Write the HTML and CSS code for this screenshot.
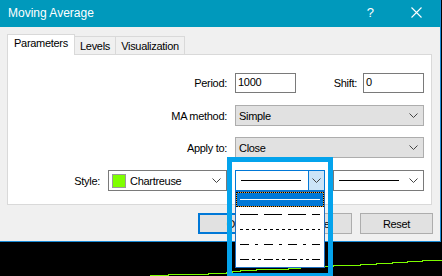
FILE: index.html
```html
<!DOCTYPE html>
<html lang="en">
<head>
  <meta charset="UTF-8">
  <title>Moving Average</title>
  <link rel="stylesheet" href="styles.css">
</head>
<body>
  <div class="dialog">
    <div class="titlebar">
      <span class="title">Moving Average</span>
      <span class="help">?</span>
      <svg class="close" width="11" height="11" viewBox="0 0 11 11">
        <path d="M0.5 0.5 L10.5 10.5 M10.5 0.5 L0.5 10.5" stroke="#fff" stroke-width="1.1" fill="none"/>
      </svg>
    </div>

    <div class="content">
      <div class="tabs">
        <div class="tab active">Parameters</div>
        <div class="tab">Levels</div>
        <div class="tab">Visualization</div>
      </div>

      <div class="panel">
        <div class="row first">
          <span class="label">Period:</span>
          <div class="input">1000</div>
          <span class="label shift">Shift:</span>
          <div class="input">0</div>
        </div>

        <div class="row">
          <span class="label">MA method:</span>
          <div class="select wide">
            <span class="value">Simple</span>
            <svg class="chev" width="9" height="5" viewBox="0 0 9 5"><polyline points="0.5,0.5 4.5,4.5 8.5,0.5" fill="none" stroke="#444" stroke-width="1"/></svg>
          </div>
        </div>

        <div class="row">
          <span class="label">Apply to:</span>
          <div class="select wide">
            <span class="value">Close</span>
            <svg class="chev" width="9" height="5" viewBox="0 0 9 5"><polyline points="0.5,0.5 4.5,4.5 8.5,0.5" fill="none" stroke="#444" stroke-width="1"/></svg>
          </div>
        </div>

        <div class="row">
          <span class="label">Style:</span>
          <div class="select color">
            <span class="swatch"></span>
            <span class="value">Chartreuse</span>
            <svg class="chev" width="9" height="5" viewBox="0 0 9 5"><polyline points="0.5,0.5 4.5,4.5 8.5,0.5" fill="none" stroke="#444" stroke-width="1"/></svg>
          </div>

          <div class="select line open">
            <div class="line-area"><span class="solid"></span></div>
            <div class="drop-btn">
              <svg width="9" height="5" viewBox="0 0 9 5"><polyline points="0.5,0.5 4.5,4.5 8.5,0.5" fill="none" stroke="#444" stroke-width="1"/></svg>
            </div>
            <div class="droplist">
              <div class="opt sel"><svg width="80" height="1"><line x1="0" y1="0.5" x2="80" y2="0.5" stroke="#fff"/></svg></div>
              <div class="opt"><svg width="80" height="1"><line x1="0" y1="0.5" x2="80" y2="0.5" stroke="#000" stroke-dasharray="18 6"/></svg></div>
              <div class="opt"><svg width="80" height="1"><line x1="0" y1="0.5" x2="80" y2="0.5" stroke="#000" stroke-dasharray="3 3"/></svg></div>
              <div class="opt"><svg width="80" height="1"><line x1="0" y1="0.5" x2="80" y2="0.5" stroke="#000" stroke-dasharray="9 6 3 6"/></svg></div>
              <div class="opt"><svg width="80" height="1"><line x1="0" y1="0.5" x2="80" y2="0.5" stroke="#000" stroke-dasharray="9 3 3 3 3 3"/></svg></div>
            </div>
          </div>

          <div class="select line">
            <div class="line-area"><span class="solid"></span></div>
            <svg class="chev" width="9" height="5" viewBox="0 0 9 5"><polyline points="0.5,0.5 4.5,4.5 8.5,0.5" fill="none" stroke="#444" stroke-width="1"/></svg>
          </div>
        </div>
      </div>

      <div class="buttons">
        <button class="btn default">OK</button>
        <button class="btn">Cancel</button>
        <button class="btn">Reset</button>
      </div>
    </div>
  </div>

  <svg class="chart" width="442" height="34" viewBox="0 242 442 34">
    <path d="M150 275.5 H168 V274.5 H208 V273.5 H226 V272.5 H232 V271.5 H240 V270.5 H256 V269.5 H288 V268.5 H300 V267.5 H316 V266.5 H333 V265.5 H360 V264.5 H376 V263.5 H392 V262.5 H407 V261.5 H422 V260.5 H442" fill="none" stroke="#7cfc00" stroke-width="1" shape-rendering="crispEdges"/>
  </svg>

  <div class="callout"></div>
</body>
</html>
```

FILE: styles.css
```css
html, body {
  margin: 0;
  padding: 0;
}
body {
  width: 442px;
  height: 276px;
  overflow: hidden;
  background: #000;
  font-family: "Liberation Sans", Arial, sans-serif;
  font-size: 11px;
  letter-spacing: -0.3px;
  color: #000;
  position: relative;
}

.dialog {
  width: 440px;
  height: 241px;
  background: #f0f0f0;
  border-right: 1px solid #1a8ad4;
  border-bottom: 1px solid #1a8ad4;
  display: flex;
  flex-direction: column;
}

.titlebar {
  height: 27px;
  flex: none;
  background: #0099bc;
  color: #fff;
  display: flex;
  align-items: center;
}
.title {
  font-size: 12px;
  letter-spacing: 0;
  margin-left: 8px;
  margin-top: -2px;
  flex: 1;
}
.help {
  font-size: 13px;
  letter-spacing: 0;
  margin-right: 37px;
  margin-top: -2px;
}
.close {
  margin-right: 18px;
  margin-top: -3px;
}

.content {
  padding: 7px 8px 7px 7px;
  flex: 1;
  display: flex;
  flex-direction: column;
}

.tabs {
  display: flex;
  align-items: flex-end;
  height: 20px;
}
.tab {
  box-sizing: border-box;
  height: 18px;
  border: 1px solid #d9d9d9;
  border-bottom: none;
  margin-left: -1px;
  text-align: center;
  line-height: 17px;
  padding-top: 1px;
  background: #f0f0f0;
}
.tab:nth-child(1) { width: 68px; margin-left: 0; }
.tab:nth-child(2) { width: 42px; }
.tab:nth-child(3) { width: 70px; }
.tab.active {
  height: 21px;
  margin-bottom: -1px;
  background: #fff;
  position: relative;
  z-index: 1;
  line-height: 17px;
  padding-top: 0;
}

.panel {
  border: 1px solid #d9d9d9;
  background: #fff;
  padding: 0 7px 13px 0;
  display: flex;
  flex-direction: column;
}

.row {
  display: flex;
  justify-content: flex-end;
  align-items: center;
  height: 21px;
  margin-top: 12px;
}
.row.first { margin-top: 17px; }
.row:nth-child(3) { margin-top: 11px; }

.label {
  margin-right: 8px;
  padding-top: 1px;
}
.label.shift {
  width: 61px;
  text-align: right;
  margin-right: 6px;
}

.input {
  box-sizing: border-box;
  width: 61px;
  height: 20px;
  border: 1px solid #7a7a7a;
  background: #fff;
  padding-left: 2px;
  line-height: 17px;
}

.select {
  box-sizing: border-box;
  height: 21px;
  border: 1px solid #adadad;
  background: #e1e1e1;
  display: flex;
  align-items: center;
  padding-left: 3px;
}
.select .value { flex: 1; padding-top: 1px; }
.select .chev { margin-right: 5px; }
.select.wide { width: 189px; }

.select.color {
  width: 119px;
  background: #fff;
  border-color: #7a7a7a;
  margin-right: 8px;
}
.swatch {
  box-sizing: border-box;
  width: 14px;
  height: 14px;
  background: #7fff00;
  border: 1px solid #9a9a9a;
  margin-right: 4px;
}

.select.line {
  width: 91px;
  background: #fff;
  border-color: #7a7a7a;
  padding-left: 0;
}
.line-area {
  flex: 1;
  align-self: stretch;
  display: flex;
  align-items: center;
  padding-left: 5px;
}
.solid {
  display: block;
  width: 60px;
  height: 1px;
  background: #000;
}

.select.open {
  width: 90px;
  margin-right: 8px;
  border-color: #0078d7;
  position: relative;
}
.drop-btn {
  box-sizing: border-box;
  width: 17px;
  align-self: stretch;
  margin: -1px -1px -1px 0;
  border: 1px solid #0078d7;
  background: #cce4f7;
  display: flex;
  align-items: center;
  justify-content: center;
}

.droplist {
  position: absolute;
  left: -1px;
  top: 20px;
  width: 90px;
  box-sizing: border-box;
  border: 1px solid #1c6fc0;
  background: #fff;
  z-index: 5;
}
.opt {
  box-sizing: border-box;
  height: 15px;
  display: flex;
  align-items: center;
  padding-left: 4px;
}
.opt svg { display: block; }
.opt.sel {
  border: 1px dotted #000;
  background: linear-gradient(#0078d7, #0078d7) padding-box, #f0a030;
  padding-left: 3px;
}

.buttons {
  display: flex;
  justify-content: flex-end;
  gap: 8px;
  margin-top: 8px;
  margin-right: -1px;
}
.btn {
  box-sizing: border-box;
  width: 73px;
  height: 21px;
  border: 1px solid #adadad;
  background: #e1e1e1;
  font: inherit;
  letter-spacing: inherit;
  color: #000;
  padding: 0;
}
.btn.default {
  border: 2px solid #0078d7;
}

.chart {
  display: block;
}

.callout {
  position: absolute;
  left: 227px;
  top: 157px;
  width: 106px;
  height: 121px;
  box-sizing: border-box;
  border: 5px solid #04a3ec;
  z-index: 6;
}
```
